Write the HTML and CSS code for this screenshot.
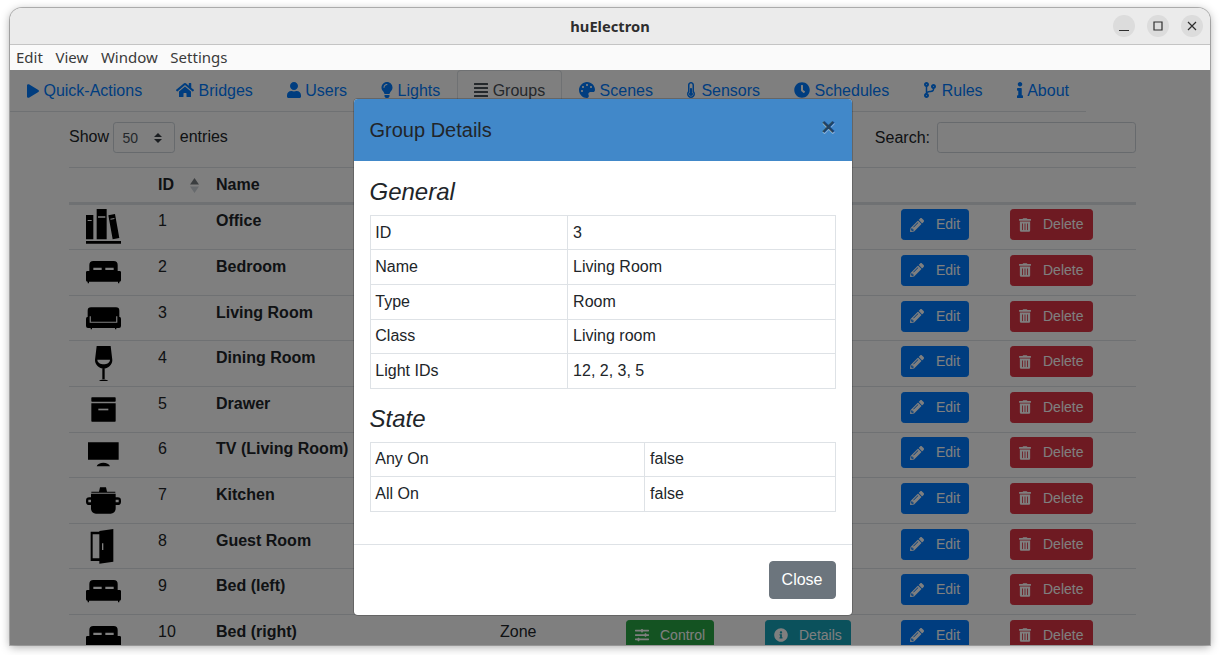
FILE: index.html
```html
<!DOCTYPE html>
<html lang="en">
<head>
  <meta charset="UTF-8" />
  <title>huElectron</title>
  <link rel="stylesheet" href="styles.css">
</head>
<body>
  <svg class="defs" aria-hidden="true">
    <symbol id="i-play" viewBox="0 0 448 512"><path d="M424.4 214.7L72.4 6.6C43.8-10.3 0 6.1 0 47.9V464c0 37.5 40.7 60.1 72.4 41.3l352-208c31.4-18.5 31.5-64.1 0-82.6z"/></symbol>
    <symbol id="i-home" viewBox="0 0 576 512"><path d="M280.37 148.26L96 300.11V464a16 16 0 0 0 16 16l112.06-.29a16 16 0 0 0 15.92-16V368a16 16 0 0 1 16-16h64a16 16 0 0 1 16 16v95.64a16 16 0 0 0 16 16.05L464 480a16 16 0 0 0 16-16V300L295.67 148.26a12.19 12.19 0 0 0-15.3 0zM571.6 251.47L488 182.56V44.05a12 12 0 0 0-12-12h-56a12 12 0 0 0-12 12v72.61L318.47 43a48 48 0 0 0-61 0L4.34 251.47a12 12 0 0 0-1.6 16.9l25.5 31A12 12 0 0 0 45.15 301l235.22-193.74a12.19 12.19 0 0 1 15.3 0L530.9 301a12 12 0 0 0 16.9-1.6l25.5-31a12 12 0 0 0-1.7-16.93z"/></symbol>
    <symbol id="i-user" viewBox="0 0 448 512"><path d="M224 256c70.7 0 128-57.3 128-128S294.7 0 224 0 96 57.3 96 128s57.3 128 128 128zm89.6 32h-16.7c-22.2 10.2-46.9 16-72.9 16s-50.6-5.8-72.9-16h-16.7C60.2 288 0 348.2 0 422.4V464c0 26.5 21.5 48 48 48h352c26.5 0 48-21.5 48-48v-41.6c0-74.2-60.2-134.4-134.4-134.4z"/></symbol>
    <symbol id="i-bulb" viewBox="0 0 352 512"><path d="M96.06 454.35c.01 6.29 1.87 12.45 5.36 17.69l17.09 25.69a31.99 31.99 0 0 0 26.64 14.28h61.71a31.99 31.99 0 0 0 26.64-14.28l17.09-25.69a31.989 31.989 0 0 0 5.36-17.69l.04-38.35H96.01l.05 38.35zM0 176c0 44.37 16.45 84.85 43.56 115.78 16.52 18.85 42.36 58.23 52.21 91.45.04.26.07.52.11.78h160.24c.04-.26.07-.51.11-.78 9.85-33.22 35.69-72.6 52.21-91.45C335.55 260.85 352 220.37 352 176 352 78.61 272.91-.3 175.45 0 73.44.31 0 82.97 0 176zm176-80c-44.11 0-80 35.89-80 80 0 8.84-7.16 16-16 16s-16-7.16-16-16c0-61.76 50.24-112 112-112 8.84 0 16 7.16 16 16s-7.16 16-16 16z"/></symbol>
    <symbol id="i-lines" viewBox="0 0 448 512"><path d="M432 416H16a16 16 0 0 0-16 16v32a16 16 0 0 0 16 16h416a16 16 0 0 0 16-16v-32a16 16 0 0 0-16-16zm0-128H16a16 16 0 0 0-16 16v32a16 16 0 0 0 16 16h416a16 16 0 0 0 16-16v-32a16 16 0 0 0-16-16zm0-128H16a16 16 0 0 0-16 16v32a16 16 0 0 0 16 16h416a16 16 0 0 0 16-16v-32a16 16 0 0 0-16-16zm0-128H16A16 16 0 0 0 0 48v32a16 16 0 0 0 16 16h416a16 16 0 0 0 16-16V48a16 16 0 0 0-16-16z"/></symbol>
    <symbol id="i-palette" viewBox="0 0 512 512"><path d="M204.3 5C104.9 24.4 24.8 104.3 5.2 203.4c-37 187 131.7 326.4 258.8 306.7 41.2-6.4 61.4-54.6 42.5-91.7-23.1-45.4 9.9-98.4 60.9-98.4h79.7c35.8 0 64.8-29.6 64.9-65.3C511.5 97.1 368.1-26.9 204.3 5zM96 320c-17.7 0-32-14.3-32-32s14.3-32 32-32 32 14.3 32 32-14.3 32-32 32zm32-128c-17.7 0-32-14.3-32-32s14.3-32 32-32 32 14.3 32 32-14.3 32-32 32zm128-64c-17.7 0-32-14.3-32-32s14.3-32 32-32 32 14.3 32 32-14.3 32-32 32zm128 64c-17.7 0-32-14.3-32-32s14.3-32 32-32 32 14.3 32 32-14.3 32-32 32z"/></symbol>
    <symbol id="i-thermo" viewBox="0 0 256 512"><path d="M192 384c0 35.346-28.654 64-64 64s-64-28.654-64-64c0-23.685 12.876-44.349 32-55.417V224c0-17.673 14.327-32 32-32s32 14.327 32 32v104.583c19.124 11.068 32 31.732 32 55.417zm32-84.653c19.912 22.563 32 52.194 32 84.653 0 70.696-57.303 128-128 128-.299 0-.609-.001-.909-.003C56.789 511.509-.357 453.636.002 383.333.166 351.135 12.225 321.755 32 299.347V96c0-53.019 42.981-96 96-96s96 42.981 96 96v203.347zM208 384c0-34.339-19.37-52.19-32-66.502V96c0-26.467-21.533-48-48-48S80 69.533 80 96v221.498c-12.732 14.428-31.825 32.1-31.999 66.08-.224 43.876 35.563 80.116 79.423 80.42L128 464c44.112 0 80-35.888 80-80z"/></symbol>
    <symbol id="i-clock" viewBox="0 0 512 512"><path d="M256,8C119,8,8,119,8,256S119,504,256,504,504,393,504,256,393,8,256,8Zm92.49,313h0l-20,25a16,16,0,0,1-22.49,2.5h0l-67-49.72a40,40,0,0,1-15-31.23V112a16,16,0,0,1,16-16h32a16,16,0,0,1,16,16V256l58,42.5A16,16,0,0,1,348.49,321Z"/></symbol>
    <symbol id="i-branch" viewBox="0 0 384 512"><path d="M384 144c0-44.2-35.8-80-80-80s-80 35.8-80 80c0 36.4 24.3 67.1 57.5 76.8-.6 16.1-4.2 28.5-11 36.9-15.4 19.2-49.3 22.4-85.2 25.7-28.2 2.6-57.4 5.4-81.3 16.9v-144c32.5-10.2 56-40.5 56-76.3 0-44.2-35.8-80-80-80S0 35.8 0 80c0 35.8 23.5 66.1 56 76.3v199.3C23.5 365.9 0 396.2 0 432c0 44.2 35.8 80 80 80s80-35.8 80-80c0-34-21.2-63.1-51.2-74.6 3.1-5.2 7.8-9.8 14.9-13.4 16.2-8.2 40.4-10.4 66.1-12.8 42.2-3.9 90-8.4 118.2-43.4 14-17.4 21.1-39.8 21.6-67.9 31.6-10.8 54.4-40.7 54.4-75.9zM80 64c8.8 0 16 7.2 16 16s-7.2 16-16 16-16-7.2-16-16 7.2-16 16-16zm0 384c-8.8 0-16-7.2-16-16s7.2-16 16-16 16 7.2 16 16-7.2 16-16 16zm224-320c8.8 0 16 7.2 16 16s-7.2 16-16 16-16-7.2-16-16 7.2-16 16-16z"/></symbol>
    <symbol id="i-info" viewBox="0 0 192 512"><path d="M20 424.229h20V279.771H20c-11.046 0-20-8.954-20-20V212c0-11.046 8.954-20 20-20h112c11.046 0 20 8.954 20 20v212.229h20c11.046 0 20 8.954 20 20V492c0 11.046-8.954 20-20 20H20c-11.046 0-20-8.954-20-20v-47.771c0-11.046 8.954-20 20-20zM96 0C56.235 0 24 32.235 24 72s32.235 72 72 72 72-32.235 72-72S135.764 0 96 0z"/></symbol>
    <symbol id="i-pencil" viewBox="0 0 512 512"><path d="M497.9 142.1l-46.1 46.1c-4.7 4.7-12.3 4.7-17 0l-111-111c-4.7-4.7-4.7-12.3 0-17l46.1-46.1c18.7-18.7 49.1-18.7 67.9 0l60.1 60.1c18.8 18.7 18.8 49.1 0 67.9zM284.2 99.8L21.6 362.4.4 483.9c-2.9 16.4 11.4 30.6 27.8 27.8l121.5-21.3 262.6-262.6c4.7-4.7 4.7-12.3 0-17l-111-111c-4.8-4.7-12.4-4.7-17.1 0zM124.1 339.9c-5.5-5.5-5.5-14.3 0-19.8l154-154c5.5-5.5 14.3-5.5 19.8 0s5.5 14.3 0 19.8l-154 154c-5.5 5.5-14.3 5.5-19.8 0zM88 424h48v36.3l-64.5 11.3-31.1-31.1L51.7 376H88v48z"/></symbol>
    <symbol id="i-trash" viewBox="0 0 448 512"><path d="M32 464a48 48 0 0 0 48 48h288a48 48 0 0 0 48-48V128H32zm272-256a16 16 0 0 1 32 0v224a16 16 0 0 1-32 0zm-96 0a16 16 0 0 1 32 0v224a16 16 0 0 1-32 0zm-96 0a16 16 0 0 1 32 0v224a16 16 0 0 1-32 0zM432 32H312l-9.4-18.7A24 24 0 0 0 281.1 0H166.8a23.72 23.72 0 0 0-21.4 13.3L136 32H16A16 16 0 0 0 0 48v32a16 16 0 0 0 16 16h416a16 16 0 0 0 16-16V48a16 16 0 0 0-16-16z"/></symbol>
    <symbol id="i-sliders" viewBox="0 0 512 512"><path d="M496 384H160v-16c0-8.8-7.2-16-16-16h-32c-8.8 0-16 7.2-16 16v16H16c-8.8 0-16 7.2-16 16v32c0 8.8 7.2 16 16 16h80v16c0 8.8 7.2 16 16 16h32c8.8 0 16-7.2 16-16v-16h336c8.8 0 16-7.2 16-16v-32c0-8.8-7.2-16-16-16zm0-160h-80v-16c0-8.8-7.2-16-16-16h-32c-8.8 0-16 7.2-16 16v16H16c-8.8 0-16 7.2-16 16v32c0 8.8 7.2 16 16 16h336v16c0 8.8 7.2 16 16 16h32c8.8 0 16-7.2 16-16v-16h80c8.8 0 16-7.2 16-16v-32c0-8.8-7.2-16-16-16zm0-160H288V48c0-8.8-7.2-16-16-16h-32c-8.8 0-16 7.2-16 16v16H16C7.2 64 0 71.2 0 80v32c0 8.8 7.2 16 16 16h208v16c0 8.8 7.2 16 16 16h32c8.8 0 16-7.2 16-16v-16h208c8.8 0 16-7.2 16-16V80c0-8.8-7.2-16-16-16z"/></symbol>
    <symbol id="i-infoc" viewBox="0 0 512 512"><path d="M256 8C119.043 8 8 119.083 8 256c0 136.997 111.043 248 248 248s248-111.003 248-248C504 119.083 392.957 8 256 8zm0 110c23.196 0 42 18.804 42 42s-18.804 42-42 42-42-18.804-42-42 18.804-42 42-42zm56 254c0 6.627-5.373 12-12 12h-88c-6.627 0-12-5.373-12-12v-24c0-6.627 5.373-12 12-12h12v-64h-12c-6.627 0-12-5.373-12-12v-24c0-6.627 5.373-12 12-12h64c6.627 0 12 5.373 12 12v100h12c6.627 0 12 5.373 12 12v24z"/></symbol>

    <!-- group icons, drawn on a 105 box -->
    <symbol id="g-books" viewBox="0 0 105 105">
      <path d="M0 18h22v73H0zM32 0h30v91H32zM67 19l20-4 13 72-20 4zM0 96h105v8H0z"/>
      <path class="cut" d="M5 33h12v3H5zM36 22h22v4H36zM73 29l12-2 .6 3-12 2z"/>
    </symbol>
    <symbol id="g-bed" viewBox="0 0 105 105">
      <path d="M22 18h61a12 12 0 0 1 12 12v20H10V30a12 12 0 0 1 12-12zM4 48h97a4 4 0 0 1 4 4v24a4 4 0 0 1-4 4H4a4 4 0 0 1-4-4V52a4 4 0 0 1 4-4zM5 80h4v5H5zM96 80h4v5h-4z"/>
      <path class="cut" d="M22 38h25v7H22zM58 38h25v7H58z"/>
    </symbol>
    <symbol id="g-sofa" viewBox="0 0 105 105">
      <path d="M15 19h75a10 10 0 0 1 10 10v18H5V29a10 10 0 0 1 10-10zM6 47h93a6 6 0 0 1 6 6v22a6 6 0 0 1-6 6H6a6 6 0 0 1-6-6V53a6 6 0 0 1 6-6zM14 81h4v4h-4zM87 81h4v4h-4z"/>
      <path class="cut" d="M11 46h3.500v16h76V46H94v19.500H11z"/>
    </symbol>
    <symbol id="g-glass" viewBox="0 0 105 105">
      <path d="M32 0h42l5 42c0 16-14 26-26 26S27 58 27 42zM49 66h7v34h-7zM39 105c3-5 25-5 28 0z"/>
      <path class="cut" d="M34 41h38c0 9-10 14-19 14s-19-5-19-14z"/>
    </symbol>
    <symbol id="g-box" viewBox="0 0 105 105">
      <path d="M18 16h69a2 2 0 0 1 2 2v9a2 2 0 0 1-2 2H18a2 2 0 0 1-2-2v-9a2 2 0 0 1 2-2zM16 34h73v53a2 2 0 0 1-2 2H18a2 2 0 0 1-2-2z"/>
      <path class="cut" d="M37 50h30v5H37z"/>
    </symbol>
    <symbol id="g-tv" viewBox="0 0 105 105">
      <path d="M6 16h92v52H6zM32 88c4-14 36-14 40 0z"/>
    </symbol>
    <symbol id="g-pot" viewBox="0 0 105 105">
      <path d="M42 13h18l3 13H39zM16 26h72v3H16zM15 32h74v44c0 10-7 16-15 16H30c-8 0-15-6-15-16zM10 43h85a10 10 0 0 1 10 10v3a10 10 0 0 1-10 10H10A10 10 0 0 1 0 56v-3a10 10 0 0 1 10-10z"/>
      <path class="cut" d="M7 50h8v8H7zM89 50h9v8h-9z"/>
    </symbol>
    <symbol id="g-door" viewBox="0 0 105 105">
      <path d="M14 8h30v88H14zM40 6l42-6v98l-42 6z"/>
      <path class="cut" d="M20 16h20v72H20zM48 43h4v20h-4z"/>
    </symbol>
  </svg>

  <div class="window">
    <header class="titlebar">
      <span></span>
      <span class="title">huElectron</span>
      <div class="wm-buttons">
        <span class="wm-btn"><svg width="12" height="12" viewBox="0 0 12 12"><path d="M1 10.500h10" /></svg></span>
        <span class="wm-btn"><svg width="12" height="12" viewBox="0 0 12 12"><path d="M2 2h8v8H2z" /></svg></span>
        <span class="wm-btn"><svg width="12" height="12" viewBox="0 0 12 12"><path d="M2 2l8 8M10 2l-8 8" /></svg></span>
      </div>
    </header>
    <nav class="menubar">
      <span>Edit</span>
      <span>View</span>
      <span>Window</span>
      <span>Settings</span>
    </nav>

    <div class="content">
      <ul class="tabs">
        <li class="tab"><svg class="ico" width="12" height="14"><use href="#i-play"/></svg> Quick-Actions</li>
        <li class="tab"><svg class="ico" width="18" height="16"><use href="#i-home"/></svg> Bridges</li>
        <li class="tab"><svg class="ico" width="14" height="16"><use href="#i-user"/></svg> Users</li>
        <li class="tab"><svg class="ico" width="12" height="16"><use href="#i-bulb"/></svg> Lights</li>
        <li class="tab active"><svg class="ico" width="14" height="16"><use href="#i-lines"/></svg> Groups</li>
        <li class="tab"><svg class="ico" width="16" height="16"><use href="#i-palette"/></svg> Scenes</li>
        <li class="tab"><svg class="ico wide" width="8" height="16"><use href="#i-thermo"/></svg> Sensors</li>
        <li class="tab"><svg class="ico" width="16" height="16"><use href="#i-clock"/></svg> Schedules</li>
        <li class="tab"><svg class="ico" width="14" height="16"><use href="#i-branch"/></svg> Rules</li>
        <li class="tab"><svg class="ico about" width="6" height="16"><use href="#i-info"/></svg> About</li>
      </ul>

      <div class="list">
        <div class="list-controls">
          <label class="length"><span class="raised">Show</span> <select class="select-sm"><option>50</option></select> <span class="raised">entries</span></label>
          <label class="search">Search: <input class="input-sm" type="text"></label>
        </div>

        <table class="groups">
          <colgroup>
            <col class="c-icon"><col class="c-id"><col class="c-name"><col class="c-type">
            <col class="c-control"><col class="c-details"><col class="c-edit"><col class="c-delete">
          </colgroup>
          <thead>
            <tr>
              <th></th>
              <th class="sortable">ID
                <svg class="sort" width="9" height="15" viewBox="0 0 9 15"><path class="up" d="M4.500 0L9 6.500H0z"/><path class="down" d="M4.500 15L0 8.500h9z"/></svg>
              </th>
              <th>Name</th>
              <th></th><th></th><th></th><th></th><th></th>
            </tr>
          </thead>
          <tbody>
            <tr>
              <td class="icon"><svg width="35" height="35"><use href="#g-books"/></svg></td>
              <td>1</td><td class="name">Office</td><td></td><td></td><td></td>
              <td><button class="btn edit"><svg width="14" height="14"><use href="#i-pencil"/></svg>Edit</button></td>
              <td><button class="btn delete"><svg width="12" height="14"><use href="#i-trash"/></svg>Delete</button></td>
            </tr>
            <tr>
              <td class="icon"><svg width="35" height="35"><use href="#g-bed"/></svg></td>
              <td>2</td><td class="name">Bedroom</td><td></td><td></td><td></td>
              <td><button class="btn edit"><svg width="14" height="14"><use href="#i-pencil"/></svg>Edit</button></td>
              <td><button class="btn delete"><svg width="12" height="14"><use href="#i-trash"/></svg>Delete</button></td>
            </tr>
            <tr>
              <td class="icon"><svg width="35" height="35"><use href="#g-sofa"/></svg></td>
              <td>3</td><td class="name">Living Room</td><td></td><td></td><td></td>
              <td><button class="btn edit"><svg width="14" height="14"><use href="#i-pencil"/></svg>Edit</button></td>
              <td><button class="btn delete"><svg width="12" height="14"><use href="#i-trash"/></svg>Delete</button></td>
            </tr>
            <tr>
              <td class="icon"><svg width="35" height="35"><use href="#g-glass"/></svg></td>
              <td>4</td><td class="name">Dining Room</td><td></td><td></td><td></td>
              <td><button class="btn edit"><svg width="14" height="14"><use href="#i-pencil"/></svg>Edit</button></td>
              <td><button class="btn delete"><svg width="12" height="14"><use href="#i-trash"/></svg>Delete</button></td>
            </tr>
            <tr>
              <td class="icon"><svg width="35" height="35"><use href="#g-box"/></svg></td>
              <td>5</td><td class="name">Drawer</td><td></td><td></td><td></td>
              <td><button class="btn edit"><svg width="14" height="14"><use href="#i-pencil"/></svg>Edit</button></td>
              <td><button class="btn delete"><svg width="12" height="14"><use href="#i-trash"/></svg>Delete</button></td>
            </tr>
            <tr>
              <td class="icon"><svg width="35" height="35"><use href="#g-tv"/></svg></td>
              <td>6</td><td class="name">TV (Living Room)</td><td></td><td></td><td></td>
              <td><button class="btn edit"><svg width="14" height="14"><use href="#i-pencil"/></svg>Edit</button></td>
              <td><button class="btn delete"><svg width="12" height="14"><use href="#i-trash"/></svg>Delete</button></td>
            </tr>
            <tr>
              <td class="icon"><svg width="35" height="35"><use href="#g-pot"/></svg></td>
              <td>7</td><td class="name">Kitchen</td><td></td><td></td><td></td>
              <td><button class="btn edit"><svg width="14" height="14"><use href="#i-pencil"/></svg>Edit</button></td>
              <td><button class="btn delete"><svg width="12" height="14"><use href="#i-trash"/></svg>Delete</button></td>
            </tr>
            <tr>
              <td class="icon"><svg width="35" height="35"><use href="#g-door"/></svg></td>
              <td>8</td><td class="name">Guest Room</td><td></td><td></td><td></td>
              <td><button class="btn edit"><svg width="14" height="14"><use href="#i-pencil"/></svg>Edit</button></td>
              <td><button class="btn delete"><svg width="12" height="14"><use href="#i-trash"/></svg>Delete</button></td>
            </tr>
            <tr>
              <td class="icon"><svg width="35" height="35"><use href="#g-bed"/></svg></td>
              <td>9</td><td class="name">Bed (left)</td><td></td><td></td><td></td>
              <td><button class="btn edit"><svg width="14" height="14"><use href="#i-pencil"/></svg>Edit</button></td>
              <td><button class="btn delete"><svg width="12" height="14"><use href="#i-trash"/></svg>Delete</button></td>
            </tr>
            <tr>
              <td class="icon"><svg width="35" height="35"><use href="#g-bed"/></svg></td>
              <td>10</td><td class="name">Bed (right)</td><td>Zone</td>
              <td><button class="btn control"><svg width="14" height="14"><use href="#i-sliders"/></svg>Control</button></td>
              <td><button class="btn details"><svg width="14" height="14"><use href="#i-infoc"/></svg>Details</button></td>
              <td><button class="btn edit"><svg width="14" height="14"><use href="#i-pencil"/></svg>Edit</button></td>
              <td><button class="btn delete"><svg width="12" height="14"><use href="#i-trash"/></svg>Delete</button></td>
            </tr>
          </tbody>
        </table>
      </div>

      <div class="backdrop">
        <div class="modal">
          <div class="modal-header">
            <h5>Group Details</h5>
            <button class="close">×</button>
          </div>
          <div class="modal-body">
            <h4>General</h4>
            <table class="details-table general">
              <tr><td>ID</td><td>3</td></tr>
              <tr><td>Name</td><td>Living Room</td></tr>
              <tr><td>Type</td><td>Room</td></tr>
              <tr><td>Class</td><td>Living room</td></tr>
              <tr><td>Light IDs</td><td>12, 2, 3, 5</td></tr>
            </table>
            <h4>State</h4>
            <table class="details-table state">
              <tr><td>Any On</td><td>false</td></tr>
              <tr><td>All On</td><td>false</td></tr>
            </table>
          </div>
          <div class="modal-footer">
            <button class="btn-close">Close</button>
          </div>
        </div>
      </div>
    </div>
  </div>
</body>
</html>
```

FILE: styles.css
```css
* {
  box-sizing: border-box;
}

html, body {
  height: 100%;
  overflow: hidden;
}

body {
  margin: 0;
  padding: 8px 10px 10px;
  background: #fff;
  font-family: "Liberation Sans", Arial, sans-serif;
  font-size: 16px;
  line-height: 1.5;
  color: #212529;
}

.defs {
  display: none;
}

.cut {
  fill: #fff;
}

/* window frame */
.window {
  display: flex;
  flex-direction: column;
  height: 637px;
  border-radius: 12px 12px 0 0;
  overflow: hidden;
  box-shadow: 0 0 0 1px rgba(0, 0, 0, 0.25), 0 2px 10px rgba(0, 0, 0, 0.35);
}

.titlebar {
  display: grid;
  grid-template-columns: 1fr auto 1fr;
  align-items: center;
  flex: none;
  height: 37px;
  padding: 0 7px;
  background: #ebebeb;
  border-bottom: 1px solid #c4c4c4;
}

.title {
  font-family: "Noto Sans", sans-serif;
  font-size: 14.7px;
  font-weight: 700;
  color: #2e2e2e;
}

.wm-buttons {
  display: flex;
  justify-content: flex-end;
  gap: 12px;
}

.wm-btn {
  display: flex;
  align-items: center;
  justify-content: center;
  width: 22px;
  height: 22px;
  border-radius: 50%;
  background: #dcdcdc;
}

.wm-btn svg {
  fill: none;
  stroke: #2e2e2e;
  stroke-width: 1.2;
}

.menubar {
  display: flex;
  flex: none;
  gap: 12.6px;
  height: 25px;
  padding-left: 6px;
  align-items: center;
  background: #fafafa;
  font-family: "Noto Sans", sans-serif;
  font-size: 15px;
  line-height: 1;
  color: #3a3a3a;
}

/* page content */
.content {
  position: relative;
  flex: 1;
  overflow: hidden;
  background: #fff;
}

.tabs {
  display: flex;
  width: fit-content;
  margin: 0;
  padding: 0;
  list-style: none;
  border-bottom: 1px solid #dee2e6;
}

.tab {
  margin-bottom: -1px;
  padding: 8px 16px;
  border: 1px solid transparent;
  border-radius: 4px 4px 0 0;
  color: #007bff;
  white-space: nowrap;
}

.tab.active {
  color: #495057;
  background: #fff;
  border-color: #dee2e6 #dee2e6 #fff;
}

.ico {
  fill: currentColor;
  vertical-align: -2px;
}

.ico.wide {
  margin-right: 2px;
}

.ico.about {
  margin-right: 1px;
}

.list {
  width: 1067px;
  margin-left: 59px;
}

.list-controls {
  display: flex;
  justify-content: space-between;
  align-items: center;
  margin-top: 10px;
  margin-bottom: 14px;
}

.length,
.search {
  display: flex;
  align-items: center;
  gap: 4.4px;
}

.raised {
  margin-bottom: 2px;
}

.search {
  gap: 7px;
  padding-top: 1px;
}

.select-sm {
  width: 62px;
  height: 31px;
  padding: 4px 24px 4px 8px;
  font-family: inherit;
  font-size: 14px;
  color: #495057;
  background: #fff url("data:image/svg+xml,%3csvg xmlns='http://www.w3.org/2000/svg' width='4' height='5' viewBox='0 0 4 5'%3e%3cpath fill='%23343a40' d='M2 0L0 2h4zm0 5L0 3h4z'/%3e%3c/svg%3e") no-repeat right 12px center / 8px 10px;
  border: 1px solid #ced4da;
  border-radius: 3.2px;
  appearance: none;
}

.input-sm {
  width: 199px;
  height: 31px;
  margin-top: -1px;
  padding: 4px 8px;
  background: #fff;
  border: 1px solid #ced4da;
  border-radius: 3.2px;
}

.groups {
  width: 100%;
  table-layout: fixed;
  border-collapse: collapse;
}

.c-icon { width: 77px; }
.c-id { width: 58px; }
.c-name { width: 284px; }
.c-type { width: 126px; }
.c-control { width: 139px; }
.c-details { width: 136px; }
.c-edit { width: 109px; }
.c-delete { width: 138px; }

.groups th {
  position: relative;
  height: 35.6px;
  padding: 4px 12px;
  text-align: left;
  border-top: 1px solid #dee2e6;
  border-bottom: 3px solid #dee2e6;
}

.sort {
  position: absolute;
  right: 5px;
  top: 10px;
}

.sort .up {
  fill: #495057;
  opacity: 0.75;
}

.sort .down {
  fill: #ced4da;
}

.groups td {
  padding: 4.8px 12px;
  vertical-align: top;
  border-top: 1px solid #dee2e6;
}

.groups tbody tr:first-child td {
  border-top: 0;
}

.groups td.icon {
  padding-left: 17px;
}

.icon svg {
  display: block;
}

.name {
  font-weight: 700;
}

.btn {
  display: inline-flex;
  align-items: center;
  gap: 12px;
  height: 31px;
  padding: 4px 8px;
  font-family: inherit;
  font-size: 14px;
  line-height: 1.5;
  color: #fff;
  fill: #fff;
  border: 1px solid transparent;
  border-radius: 3.2px;
}

.edit { background: #007bff; border-color: #007bff; }
.delete { min-width: 83px; background: #dc3545; border-color: #dc3545; }
.control { gap: 11px; background: #28a745; border-color: #28a745; }
.details { gap: 11px; background: #17a2b8; border-color: #17a2b8; }

/* modal, over everything below the menu */
.backdrop {
  position: absolute;
  inset: 0;
  display: flex;
  justify-content: center;
  align-items: flex-start;
  padding: 28px 15px 0 0;
  background: rgba(0, 0, 0, 0.5);
}

.modal {
  width: 500px;
  background: #fff;
  border: 1px solid rgba(0, 0, 0, 0.2);
  border-radius: 4.8px;
  background-clip: padding-box;
}

.modal-header {
  display: flex;
  justify-content: space-between;
  height: 62px;
  padding: 16px;
  background: #4188c9;
  border-radius: 3.8px 3.8px 0 0;
}

.modal-header h5 {
  margin: 0;
  font-size: 20px;
  font-weight: 400;
  line-height: 1.5;
}

.close {
  align-self: flex-start;
  margin: -16px -16px -16px auto;
  padding: 16px;
  font-family: inherit;
  font-size: 24px;
  font-weight: 700;
  line-height: 1;
  color: #000;
  opacity: 0.5;
  text-shadow: 0 1px 0 #fff;
  background: transparent;
  border: 0;
}

.modal-body {
  padding: 17px 16px 16px;
}

.modal-body h4 {
  margin: 0 0 8px;
  font-size: 24px;
  font-style: italic;
  font-weight: 400;
  line-height: 1.2;
}

.details-table {
  width: 100%;
  margin-bottom: 16px;
  table-layout: fixed;
  border-collapse: collapse;
}

.details-table td {
  padding: 4.8px;
  border: 1px solid #dee2e6;
}

.details-table td + td {
  padding-left: 5.6px;
}

.general td:first-child {
  width: 197px;
}

.state td:first-child {
  width: 274px;
}

.modal-footer {
  display: flex;
  justify-content: flex-end;
  padding: 16px;
  border-top: 1px solid #dee2e6;
}

.btn-close {
  height: 38px;
  padding: 6px 12px;
  font-family: inherit;
  font-size: 16px;
  line-height: 1.5;
  color: #fff;
  background: #6c757d;
  border: 1px solid #6c757d;
  border-radius: 4px;
}
```
